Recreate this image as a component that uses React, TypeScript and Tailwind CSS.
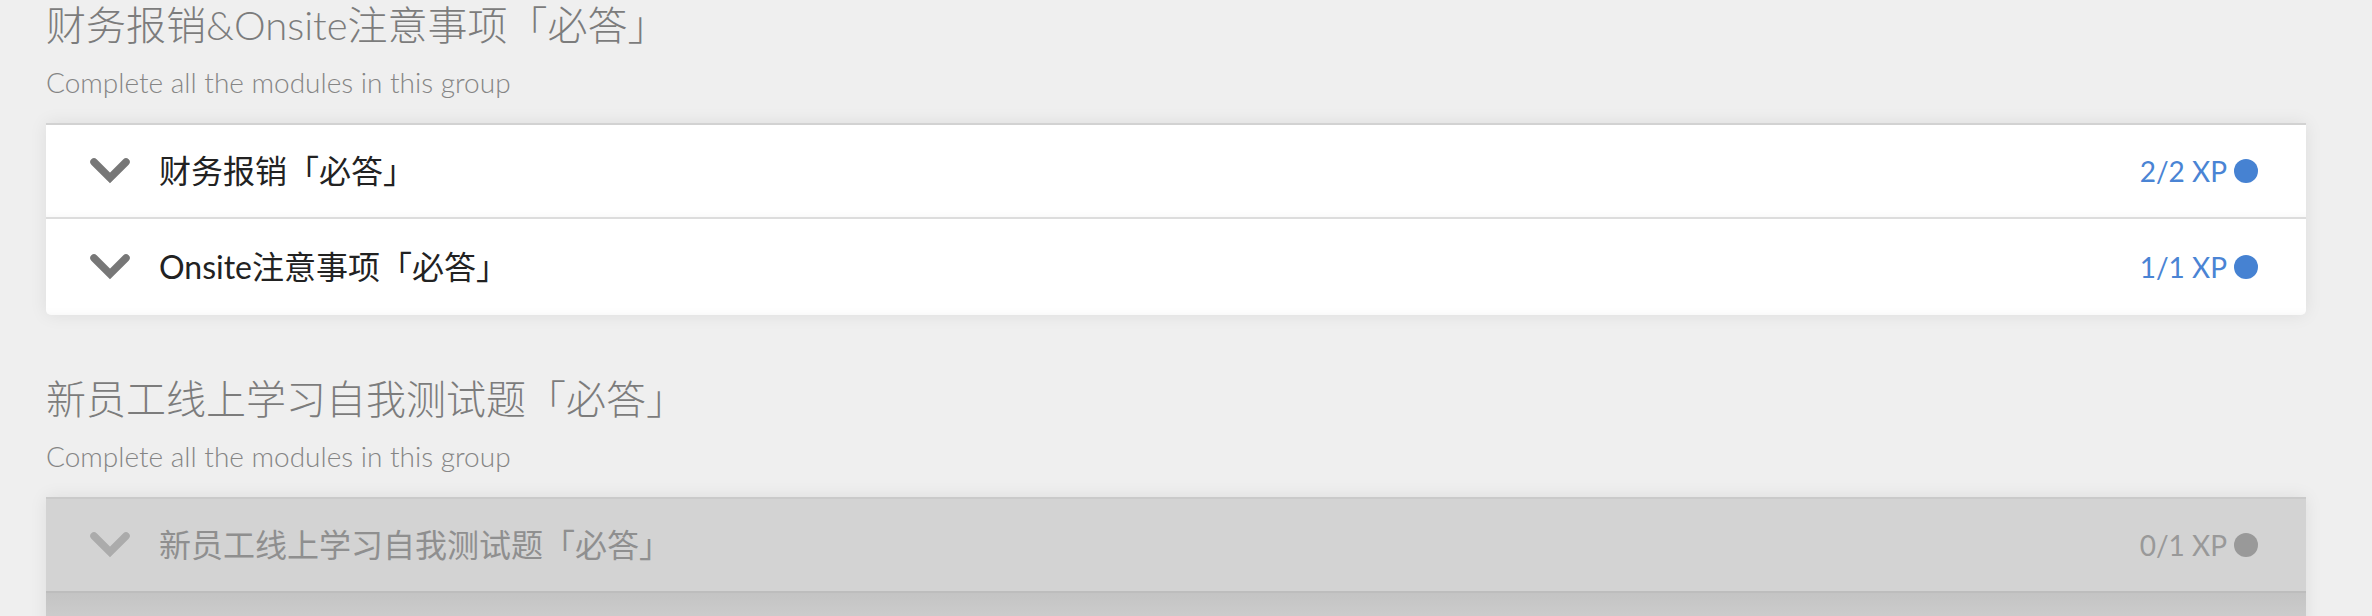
import React from "react";

type Module = { title: string; xp: string };

const Chevron = ({ color }: { color: string }) => (
  <svg width="40" height="26" viewBox="0 0 40 26" className="shrink-0">
    <polyline points="4,4 20,20 36,4" fill="none" stroke={color} strokeWidth="7.5" strokeLinecap="round" strokeLinejoin="miter" />
  </svg>
);

const Row = ({ m, disabled, last }: { m: Module; disabled?: boolean; last?: boolean }) => (
  <div
    className={`flex items-center pl-[44px] pr-[48px] ${last ? "h-[96px]" : "h-[94px] border-b-2"} ${
      disabled ? "bg-[#d3d3d3] border-[#bdbdbd]" : "bg-white border-[#dcdcdc] shadow-[inset_0_-10px_10px_-10px_rgba(0,0,0,0.05)]"
    }`}
  >
    <Chevron color={disabled ? "#ababab" : "#777777"} />
    <span className={`ml-[29px] text-[32px] leading-none ${disabled ? "text-[#8f8f8f]" : "text-[#222222]"}`}>{m.title}</span>
    <div className="ml-auto flex items-center gap-[7px]">
      <span className={`text-[28px] leading-none ${disabled ? "text-[#999999]" : "text-[#4a84d4]"}`}>{m.xp}</span>
      <span className={`w-[24px] h-[24px] rounded-full ${disabled ? "bg-[#999999]" : "bg-[#4682d2]"}`} />
    </div>
  </div>
);

const Group = ({ title, modules, disabled, className }: { title: string; modules: Module[]; disabled?: boolean; className?: string }) => (
  <section className={className}>
    <h2 className="text-[40px] leading-[48px] font-light text-[#7c7c7c]">{title}</h2>
    <p className="mt-[16px] text-[28px] leading-[34px] font-light text-[#858585]">Complete all the modules in this group</p>
    <div
      className={`mt-[24px] rounded-b-[5px] overflow-hidden border-t-2 shadow-[0_0_18px_rgba(0,0,0,0.08)] ${
        disabled ? "border-[#cacaca]" : "border-[#d2d2d2]"
      }`}
    >
      {modules.map((m, i) => (
        <Row key={i} m={m} disabled={disabled} last={!disabled && i === modules.length - 1} />
      ))}
      {disabled && <div className="h-[40px] bg-gradient-to-b from-[#c4c4c4] to-[#d1d1d1]" />}
    </div>
  </section>
);

export default function App() {
  return (
    <div className="min-h-[616px] bg-[#efefef] pl-[46px] pt-[1px] overflow-hidden" style={{ fontFamily: "Lato, 'Noto Sans CJK SC', sans-serif" }}>
      <div className="w-[2260px]">
        <Group
          title="财务报销&Onsite注意事项「必答」"
          modules={[
            { title: "财务报销「必答」", xp: "2/2 XP" },
            { title: "Onsite注意事项「必答」", xp: "1/1 XP" },
          ]}
        />
        <Group
          className="mt-[60px]"
          title="新员工线上学习自我测试题「必答」"
          modules={[{ title: "新员工线上学习自我测试题「必答」", xp: "0/1 XP" }]}
          disabled
        />
      </div>
    </div>
  );
}
